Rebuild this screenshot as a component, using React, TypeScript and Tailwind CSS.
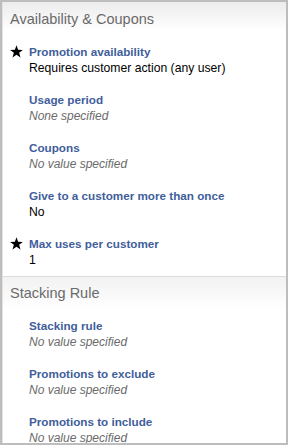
import React from "react";

type Item = { label: string; value: string; empty?: boolean; star?: boolean };

const section1: Item[] = [
  { label: "Promotion availability", value: "Requires customer action (any user)", star: true },
  { label: "Usage period", value: "None specified", empty: true },
  { label: "Coupons", value: "No value specified", empty: true },
  { label: "Give to a customer more than once", value: "No" },
  { label: "Max uses per customer", value: "1", star: true },
];

const section2: Item[] = [
  { label: "Stacking rule", value: "No value specified", empty: true },
  { label: "Promotions to exclude", value: "No value specified", empty: true },
  { label: "Promotions to include", value: "No value specified", empty: true },
];

function Star() {
  return (
    <svg width="13" height="13" viewBox="0 0 24 24" className="absolute left-[-19px] top-[1px]">
      <polygon
        points="12,0.5 15,8.8 23.8,9 16.9,14.4 19.4,23 12,18 4.6,23 7.1,14.4 0.2,9 9,8.8"
        fill="#000"
      />
    </svg>
  );
}

function Items({ items }: { items: Item[] }) {
  return (
    <div className="flex flex-col gap-4 pl-[26px]">
      {items.map((it) => (
        <div key={it.label} className="relative flex flex-col">
          {it.star && <Star />}
          <div className="text-[11.7px] leading-[16px] font-bold text-[#415e9b]">{it.label}</div>
          <div
            className={
              it.empty
                ? "text-[12px] leading-[16px] italic text-[#6b6b6b]"
                : "text-[12.2px] leading-[16px] text-black"
            }
          >
            {it.value}
          </div>
        </div>
      ))}
    </div>
  );
}

export default function App() {
  return (
    <div
      className="w-[288px] h-[445px] overflow-hidden border-2 border-[#bdbdbd] bg-white"
      style={{ fontFamily: '"Liberation Sans", Arial, sans-serif' }}
    >
      <div className="border-l border-[#e2e2e2] h-full">
        <div className="bg-gradient-to-b from-[#ececec] to-white to-[70%] pt-[8px] pl-[7px] pb-4">
          <div className="text-[14.5px] leading-[18px] text-[#6a6a6a]">Availability &amp; Coupons</div>
        </div>
        <div className="pb-2">
          <Items items={section1} />
        </div>
        <div className="border-t border-[#dcdcdc] bg-gradient-to-b from-[#f2f2f2] to-white to-[80%] pt-[7px] pl-[7px] pb-4">
          <div className="text-[14.5px] leading-[18px] text-[#6a6a6a]">Stacking Rule</div>
        </div>
        <Items items={section2} />
      </div>
    </div>
  );
}
